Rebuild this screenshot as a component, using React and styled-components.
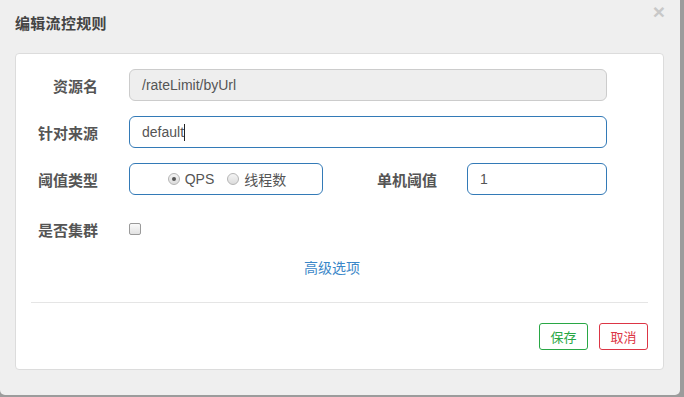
import React from 'react';
import styled, { createGlobalStyle } from 'styled-components';

const GlobalStyle = createGlobalStyle`
    html, body {
        margin: 0;
        padding: 0;
        background: #9c9c9c;
        width: 684px;
        height: 397px;
        overflow: hidden;
        font-family: "Liberation Sans", "Noto Sans CJK SC", sans-serif;
    }
    * { box-sizing: border-box; }
`

export default function App () {
    return (
        <>
            <GlobalStyle />
            <Modal>
                <Header>
                    <Title>编辑流控规则</Title>
                    <Close>×</Close>
                </Header>
                <Card>
                    <Row>
                        <Label>资源名</Label>
                        <Field disabled width={478}>/rateLimit/byUrl</Field>
                    </Row>
                    <Row>
                        <Label>针对来源</Label>
                        <Field width={478}>default<Caret /></Field>
                    </Row>
                    <Row>
                        <Label>阈值类型</Label>
                        <RadioBox>
                            <RadioItem><Radio checked />QPS</RadioItem>
                            <RadioItem><Radio />线程数</RadioItem>
                        </RadioBox>
                        <Label width={114}>单机阈值</Label>
                        <Field width={140}>1</Field>
                    </Row>
                    <CheckRow>
                        <Label>是否集群</Label>
                        <Checkbox />
                    </CheckRow>
                    <Advanced>高级选项</Advanced>
                    <Divider />
                    <Footer>
                        <Button color="#28a745">保存</Button>
                        <Button color="#dc3545">取消</Button>
                    </Footer>
                </Card>
            </Modal>
        </>
    )
}

//styled components

const Modal = styled.div`
    width: 680px;
    height: 395px;
    background: #efefef;
    border-radius: 0 0 5px 5px;
    padding: 0 16px 0 15px;
`

const Header = styled.div`
    height: 53px;
    position: relative;
    display: flex;
    align-items: center;
    padding-bottom: 8px;
`

const Title = styled.h4`
    margin: 0;
    font-family: "Noto Sans CJK SC", sans-serif;
    font-size: 15px;
    font-weight: 700;
    color: #444;
    letter-spacing: 0.3px;
`

const Close = styled.span`
    position: absolute;
    right: -1px;
    top: 1px;
    font-size: 21px;
    line-height: 21px;
    font-weight: 700;
    color: #c8c8c8;
`

const Card = styled.div`
    background: #fff;
    border: 1px solid #dcdcdc;
    border-radius: 4px;
    height: 317px;
    padding-top: 15px;
`

const Row = styled.div`
    display: flex;
    align-items: center;
    height: 32px;
    margin-bottom: 15px;
`

const CheckRow = styled(Row)`
    margin-top: 18px;
    margin-bottom: 0;
`

const Label = styled.label`
    width: ${props => props.width || 82}px;
    text-align: right;
    margin-right: ${props => props.width ? 30 : 31}px;
    font-family: "Noto Sans CJK SC", sans-serif;
    font-size: 15px;
    font-weight: 700;
    color: #555;
    flex-shrink: 0;
`

const Field = styled.div`
    width: ${props => props.width}px;
    height: 32px;
    border: 1px solid ${props => props.disabled ? "#cccccc" : "#337ab7"};
    background: ${props => props.disabled ? "#eeeeee" : "#fff"};
    border-radius: 6px;
    padding: 0 12px;
    display: flex;
    align-items: center;
    font-size: 14px;
    color: #555;
    flex-shrink: 0;
`

const Caret = styled.span`
    display: inline-block;
    width: 1px;
    height: 17px;
    background: #222;
`

const RadioBox = styled.div`
    width: 194px;
    height: 32px;
    border: 1px solid #337ab7;
    border-radius: 6px;
    display: flex;
    align-items: center;
    justify-content: center;
    gap: 13px;
    font-size: 14px;
    color: #555;
    flex-shrink: 0;
    padding-left: 2px;
`

const RadioItem = styled.span`
    display: flex;
    align-items: center;
    font-family: "Liberation Sans", "Noto Sans CJK SC", sans-serif;
`

const Radio = styled.span`
    width: 12px;
    height: 12px;
    border-radius: 50%;
    border: 1px solid #b5b5b5;
    background: linear-gradient(#f4f4f4, #dcdcdc);
    margin-right: 5px;
    position: relative;
    ${props => props.checked ? `
        &::after {
            content: "";
            position: absolute;
            left: 3px;
            top: 3px;
            width: 4px;
            height: 4px;
            border-radius: 50%;
            background: #555;
        }
    ` : ''}
`

const Checkbox = styled.span`
    width: 12px;
    height: 12px;
    border: 1px solid #9a9a9a;
    border-radius: 2px;
    background: linear-gradient(#fafafa, #e2e2e2);
`

const Advanced = styled.a`
    display: block;
    text-align: center;
    margin-top: 12px;
    padding-right: 15px;
    line-height: 20px;
    font-family: "Noto Sans CJK SC", sans-serif;
    font-size: 14px;
    color: #3a87c8;
`

const Divider = styled.div`
    height: 1px;
    background: #e5e5e5;
    margin: 25px 15px 0;
`

const Footer = styled.div`
    display: flex;
    justify-content: flex-end;
    gap: 11px;
    padding: 20px 15px 0;
`

const Button = styled.button`
    width: 49px;
    height: 27px;
    padding: 0;
    background: #fff;
    border: 1px solid ${props => props.color};
    color: ${props => props.color};
    border-radius: 3px;
    font-family: "Noto Sans CJK SC", sans-serif;
    font-size: 13px;
`
